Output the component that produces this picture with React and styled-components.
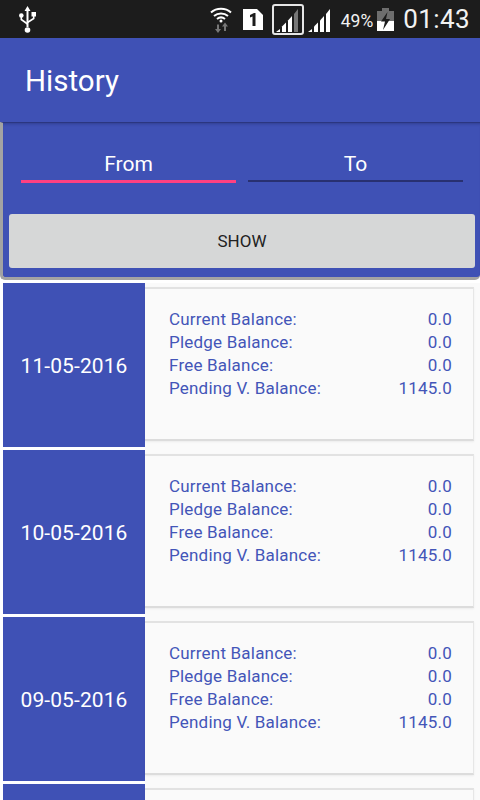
import React from 'react';
import styled, { createGlobalStyle } from 'styled-components';

const Global = createGlobalStyle`
  html, body {
    margin: 0;
    padding: 0;
    background: #ffffff;
    font-family: Roboto, "Liberation Sans", sans-serif;
  }
`;

const Screen = styled.div`
  width: 480px;
  height: 800px;
  overflow: hidden;
  background: #ffffff;
`;

const StatusBar = styled.div`
  height: 38px;
  background: #1c1c1c;
  display: flex;
  align-items: center;
  padding: 0 10px 0 19px;
  color: #ffffff;
`;

const StatusRight = styled.div`
  margin-left: auto;
  display: flex;
  align-items: center;
`;

const BatteryText = styled.span`
  font-size: 17.5px;
  margin: 3px 4px 0 9px;
  color: #f2f2f2;
`;

const Clock = styled.span`
  font-size: 26px;
  letter-spacing: 0.4px;
  margin-left: 9px;
  color: #f2f2f2;
`;

const Toolbar = styled.header`
  height: 84px;
  background: #3f51b5;
  display: flex;
  align-items: center;
  padding: 2px 0 0 25px;
  box-sizing: border-box;
  color: #ffffff;
  font-size: 29.5px;
`;

const FilterPanel = styled.section`
  height: 158px;
  box-sizing: border-box;
  background: #3f51b5;
  border-top: 1px solid #2b3680;
  border-left: 3px solid #a3a3a3;
  border-bottom: 3px solid #a3a3a3;
  border-bottom-left-radius: 5px;
  border-bottom-right-radius: 5px;
  padding: 0 5px 0 6px;
  box-shadow: inset 0 3px 3px -2px rgba(30, 40, 100, 0.45);
`;

const Tabs = styled.div`
  display: flex;
  gap: 12px;
  padding: 25px 12px 0;
  height: 91px;
  box-sizing: border-box;
`;

const Tab = styled.div`
  flex: 1;
  height: 32px;
  text-align: center;
  font-size: 21px;
  line-height: 33px;
  color: #ffffff;
  border-bottom: ${(p) => (p.$active ? '3px solid #ff4081' : '2px solid #283070')};
`;

const ShowButton = styled.button`
  display: block;
  width: 466px;
  height: 54px;
  border: none;
  border-radius: 3px;
  background: #d6d7d7;
  color: #222222;
  font-family: inherit;
  font-size: 17px;
  padding: 0;
`;

const List = styled.div`
  padding: 3px 0 0 3px;
  display: flex;
  flex-direction: column;
`;

const Row = styled.article`
  display: flex;
  height: 167px;
  flex-shrink: 0;
`;

const DateCell = styled.div`
  width: 142px;
  height: 164px;
  box-sizing: border-box;
  padding-top: 2px;
  background: #3f51b5;
  color: #ffffff;
  font-size: 21px;
  letter-spacing: 0.1px;
  display: flex;
  align-items: center;
  justify-content: center;
`;

const CardSlot = styled.div`
  flex: 1;
  background: #fafafa;
  padding-top: 4px;
`;

const Card = styled.div`
  width: 329px;
  height: 154px;
  box-sizing: border-box;
  background: #fafafa;
  border-top: 2px solid #e2e2e2;
  border-bottom: 2px solid #dcdcdc;
  border-right: 1px solid #e6e6e6;
  box-shadow: 0 1px 2px rgba(0, 0, 0, 0.06);
  padding: 19px 21px 0 24px;
`;

const Line = styled.div`
  display: flex;
  justify-content: space-between;
  height: 23px;
  line-height: 23px;
  font-size: 17px;
  letter-spacing: 0.2px;
  color: #4355b8;
`;

const UsbIcon = () => (
  <svg width="17" height="27" viewBox="0 0 17 27">
    <path d="M8.500 0 L11.500 5 H9.500 V21 H7.500 V5 H5.500 Z" fill="#fff" />
    <circle cx="8.500" cy="24" r="2.800" fill="#fff" />
    <circle cx="2.300" cy="9.500" r="2.300" fill="#fff" />
    <rect x="12.500" y="6" width="4.500" height="4.500" fill="#fff" />
    <path d="M2.300 10.500 V13.500 L8.500 18 M14.700 10 V12.500 L8.500 16.500" stroke="#fff" strokeWidth="1.600" fill="none" />
  </svg>
);

const WifiIcon = () => (
  <svg width="22" height="27" viewBox="0 0 22 27">
    <path d="M1 6.500 C6.500 1.500 15.500 1.500 21 6.500" stroke="#fff" strokeWidth="2" fill="none" />
    <path d="M4 10 C8 6.500 14 6.500 18 10" stroke="#fff" strokeWidth="2" fill="none" />
    <path d="M7 13 C9.500 11 12.500 11 15 13" stroke="#fff" strokeWidth="2" fill="none" />
    <circle cx="11" cy="15" r="1.500" fill="#fff" />
    <path d="M8 27 L5 23 H7 V18.500 H9 V23 H11 Z" fill="#777" />
    <path d="M15 16.500 L18 20.500 H16 V25 H14 V20.500 H12 Z" fill="#777" />
  </svg>
);

const SimIcon = () => (
  <svg width="20" height="21" viewBox="0 0 20 21" style={{ marginLeft: 11, marginTop: 1 }}>
    <path d="M0 0 H14 L20 6 V21 H0 Z" fill="#fff" />
    <path d="M7 6 L11 4 H12.500 V17 H9.500 V7.500 L7 8.500 Z" fill="#1c1c1c" />
  </svg>
);

const Bars = ({ dim }) => (
  <svg width="24" height="24" viewBox="0 0 24 24">
    <path d="M0 24 H4 V21 Z" fill="#fff" />
    <path d="M6 24 H10 V14.500 L6 18.500 Z" fill="#fff" />
    <path d="M12 24 H16 V8 L12 12.500 Z" fill="#fff" />
    <path d="M18 24 H22 V1 L18 6 Z" fill={dim ? '#777' : '#fff'} />
  </svg>
);

const SignalBox = styled.div`
  width: 32px;
  height: 31px;
  box-sizing: border-box;
  margin-left: 9px;
  border: 2px solid #e6e6e6;
  border-radius: 3px;
  display: flex;
  align-items: flex-end;
  justify-content: center;
  padding-bottom: 1px;
  overflow: hidden;
`;

const PlainBars = styled.span`
  display: flex;
  margin: 2px 0 0 4px;
`;

const BatteryIcon = () => (
  <svg width="17" height="23" viewBox="0 0 17 23">
    <path d="M5 0 H12 V3 H17 V23 H0 V3 H5 Z" fill="#6e6e6e" />
    <path d="M0 13 H17 V23 H0 Z" fill="#fff" />
    <path d="M10.500 4 L4 13.500 H8 L6 22 L13 11 H9 Z" fill="#1c1c1c" />
  </svg>
);

const dates = ['11-05-2016', '10-05-2016', '09-05-2016'];

const App = () => (
  <Screen>
    <Global />
    <StatusBar>
      <UsbIcon />
      <StatusRight>
        <WifiIcon />
        <SimIcon />
        <SignalBox><Bars dim /></SignalBox>
        <PlainBars><Bars /></PlainBars>
        <BatteryText>49%</BatteryText>
        <BatteryIcon />
        <Clock>01:43</Clock>
      </StatusRight>
    </StatusBar>
    <Toolbar>History</Toolbar>
    <FilterPanel>
      <Tabs>
        <Tab $active>From</Tab>
        <Tab>To</Tab>
      </Tabs>
      <ShowButton>SHOW</ShowButton>
    </FilterPanel>
    <List>
      {dates.map((d) => (
        <Row key={d}>
          <DateCell>{d}</DateCell>
          <CardSlot>
            <Card>
              <Line><span>Current Balance:</span><span>0.0</span></Line>
              <Line><span>Pledge Balance:</span><span>0.0</span></Line>
              <Line><span>Free Balance:</span><span>0.0</span></Line>
              <Line><span>Pending V. Balance:</span><span>1145.0</span></Line>
            </Card>
          </CardSlot>
        </Row>
      ))}
      {/* next row only peeks in at the bottom edge, its text is below the fold */}
      <Row>
        <DateCell />
        <CardSlot>
          <Card />
        </CardSlot>
      </Row>
    </List>
  </Screen>
);

export default App;
